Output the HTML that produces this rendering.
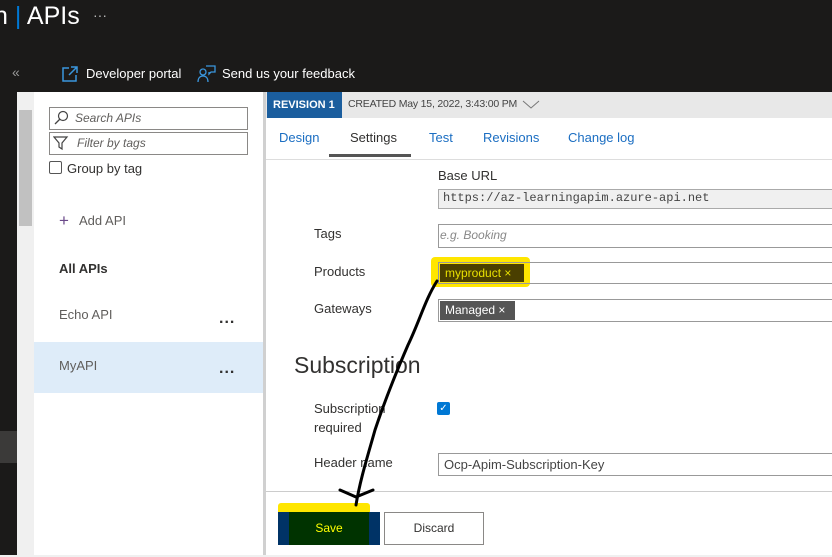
<!DOCTYPE html>
<html><head><style>
*{margin:0;padding:0;box-sizing:border-box}
body{width:832px;height:557px;background:#1b1a19;font-family:"Segoe UI","Liberation Sans",sans-serif;position:relative;overflow:hidden;font-size:13px;color:#323130}
.a{position:absolute}
.inp{position:absolute;border:1px solid #8a8886;background:#fff;height:24px}
</style></head><body>
<div class="a" style="left:-6px;top:0;color:#fff;font-size:25px;line-height:32px">n <span style="color:#0078d4">|</span> APIs</div>
<div class="a" style="left:93px;top:7px;color:#bbb;font-size:14px">···</div>
<div class="a" style="left:12px;top:64px;color:#999;font-size:14px">«</div>
<svg class="a" style="left:61px;top:65px" width="18" height="18" viewBox="0 0 18 18"><path d="M8 3H2v13h13V10M10 2h6v6M16 2 8 10" fill="none" stroke="#3a96dd" stroke-width="1.5"/></svg>
<div class="a" style="left:86px;top:66px;color:#fff;font-size:13px">Developer portal</div>
<svg class="a" style="left:197px;top:65px" width="20" height="18" viewBox="0 0 20 18"><circle cx="6" cy="7" r="3" fill="none" stroke="#3a96dd" stroke-width="1.3"/><path d="M1 17c0-4 2-6 5-6s5 2 5 6M9 1h9v6h-4l-2 2V7" fill="none" stroke="#3a96dd" stroke-width="1.3"/></svg>
<div class="a" style="left:222px;top:66px;color:#fff;font-size:13px">Send us your feedback</div>
<div class="a" style="left:0;top:431px;width:17px;height:32px;background:#3b3a39"></div>
<div class="a" style="left:17px;top:92px;width:17px;height:465px;background:#f0f0f0"></div>
<div class="a" style="left:19px;top:110px;width:13px;height:116px;background:#c1c1c1"></div>
<div class="a" style="left:34px;top:92px;width:229px;height:463px;background:#fff"></div>
<div class="a" style="left:263px;top:92px;width:3px;height:465px;background:#d0d0d0"></div>
<div class="inp" style="left:49px;top:107px;width:199px;height:23px"></div>
<svg class="a" style="left:53px;top:110px" width="16" height="16"><circle cx="10" cy="6" r="4.5" fill="none" stroke="#444" stroke-width="1.2"/><path d="M7 9 2 14" stroke="#444" stroke-width="1.3"/></svg>
<div class="a" style="left:75px;top:111px;font-style:italic;color:#605e5c;font-size:12px">Search APIs</div>
<div class="inp" style="left:49px;top:132px;width:199px;height:23px"></div>
<svg class="a" style="left:53px;top:135px" width="16" height="16"><path d="M1 2h13L9 8v6l-3-2V8z" fill="none" stroke="#444" stroke-width="1.2"/></svg>
<div class="a" style="left:77px;top:136px;font-style:italic;color:#605e5c;font-size:12px">Filter by tags</div>
<div class="a" style="left:49px;top:161px;width:13px;height:13px;border:1px solid #555;border-radius:2px"></div>
<div class="a" style="left:67px;top:161px">Group by tag</div>
<div class="a" style="left:59px;top:212px;font-size:17px;color:#6b4a8a;line-height:18px">+</div>
<div class="a" style="left:79px;top:213px;color:#605e5c">Add API</div>
<div class="a" style="left:59px;top:261px;font-weight:bold">All APIs</div>
<div class="a" style="left:59px;top:307px;color:#605e5c">Echo API</div>
<div class="a" style="left:219px;top:310px;font-size:16px;font-weight:bold;letter-spacing:1px">...</div>
<div class="a" style="left:34px;top:342px;width:229px;height:51px;background:#deecf9"></div>
<div class="a" style="left:59px;top:358px;color:#605e5c">MyAPI</div>
<div class="a" style="left:219px;top:360px;font-size:16px;font-weight:bold;letter-spacing:1px">...</div>
<div class="a" style="left:266px;top:92px;width:566px;height:465px;background:#fff"></div>
<div class="a" style="left:266px;top:92px;width:566px;height:26px;background:#e8e8e8"></div>
<div class="a" style="left:267px;top:92px;width:75px;height:26px;background:#1b5e9e;color:#fff;font-weight:bold;font-size:11px;line-height:26px;padding-left:6px">REVISION 1</div>
<div class="a" style="left:348px;top:98px;font-size:10.5px;color:#444;letter-spacing:-0.2px">CREATED May 15, 2022, 3:43:00 PM</div>
<svg class="a" style="left:522px;top:98px" width="18" height="12"><path d="M1 3l8 7 8-7" fill="none" stroke="#777"/></svg>
<div class="a" style="left:279px;top:130px;color:#1b6ec2">Design</div>
<div class="a" style="left:350px;top:130px">Settings</div>
<div class="a" style="left:429px;top:130px;color:#1b6ec2">Test</div>
<div class="a" style="left:483px;top:130px;color:#1b6ec2">Revisions</div>
<div class="a" style="left:568px;top:130px;color:#1b6ec2">Change log</div>
<div class="a" style="left:329px;top:154px;width:82px;height:3px;background:#555"></div>
<div class="a" style="left:266px;top:159px;width:566px;height:1px;background:#ddd"></div>
<div class="a" style="left:438px;top:168px">Base URL</div>
<div class="inp" style="left:438px;top:189px;width:400px;height:20px;background:#f0f0f0;border-color:#aaa"></div>
<div class="a" style="left:443px;top:191px;font-family:'Liberation Mono',monospace;font-size:12px;color:#444">https://az-learningapim.azure-api.net</div>
<div class="a" style="left:314px;top:226px">Tags</div>
<div class="inp" style="left:438px;top:224px;width:400px;height:24px;border-color:#999"></div>
<div class="a" style="left:440px;top:228px;font-style:italic;color:#888;font-size:12px">e.g. Booking</div>
<div class="a" style="left:314px;top:264px">Products</div>
<div class="a" style="left:431px;top:257px;width:99px;height:30px;background:#ffe600;border-radius:4px"></div>
<div class="inp" style="left:438px;top:262px;width:400px;height:22px;background:transparent;border-color:#999"></div>
<div class="a" style="left:440px;top:264px;width:84px;height:18px;background:#4a3f00;color:#e8e000;font-size:12px;line-height:18px;padding-left:5px">myproduct ×</div>
<div class="a" style="left:314px;top:301px">Gateways</div>
<div class="inp" style="left:438px;top:299px;width:400px;height:23px;border-color:#999"></div>
<div class="a" style="left:440px;top:301px;width:75px;height:19px;background:#555;color:#fff;font-size:12px;line-height:19px;padding-left:5px">Managed ×</div>
<div class="a" style="left:294px;top:352px;font-size:23px;color:#323130">Subscription</div>
<div class="a" style="left:314px;top:399px;line-height:19px">Subscription<br>required</div>
<div class="a" style="left:437px;top:402px;width:13px;height:13px;background:#0078d4;border-radius:2px;color:#fff;font-size:10px;line-height:13px;text-align:center">✓</div>
<div class="a" style="left:314px;top:455px">Header name</div>
<div class="inp" style="left:438px;top:453px;width:400px;height:23px;border-color:#999"></div>
<div class="a" style="left:444px;top:457px;color:#444">Ocp-Apim-Subscription-Key</div>
<div class="a" style="left:266px;top:491px;width:566px;height:1px;background:#ccc"></div>
<div class="a" style="left:278px;top:503px;width:92px;height:40px;background:#ffe600;border-radius:3px"></div>
<div class="a" style="left:278px;top:512px;width:102px;height:33px;background:#003366"></div>
<div class="a" style="left:289px;top:512px;width:80px;height:33px;background:#003300;color:#ffff00;line-height:33px;text-align:center;font-size:12px">Save</div>
<div class="a" style="left:384px;top:512px;width:100px;height:33px;border:1px solid #8a8886;line-height:31px;text-align:center;font-size:12px">Discard</div>
<svg class="a" style="left:0;top:0" width="832" height="557"><path d="M437 281 C425 300 420 320 408 345 C395 375 385 400 375 430 C368 455 360 480 356 505 M340 490 L356 497 L373 490" fill="none" stroke="#000" stroke-width="3" stroke-linecap="round"/></svg>
<div class="a" style="left:0;top:555px;width:832px;height:2px;background:#f0f0f0"></div>
</body></html>
